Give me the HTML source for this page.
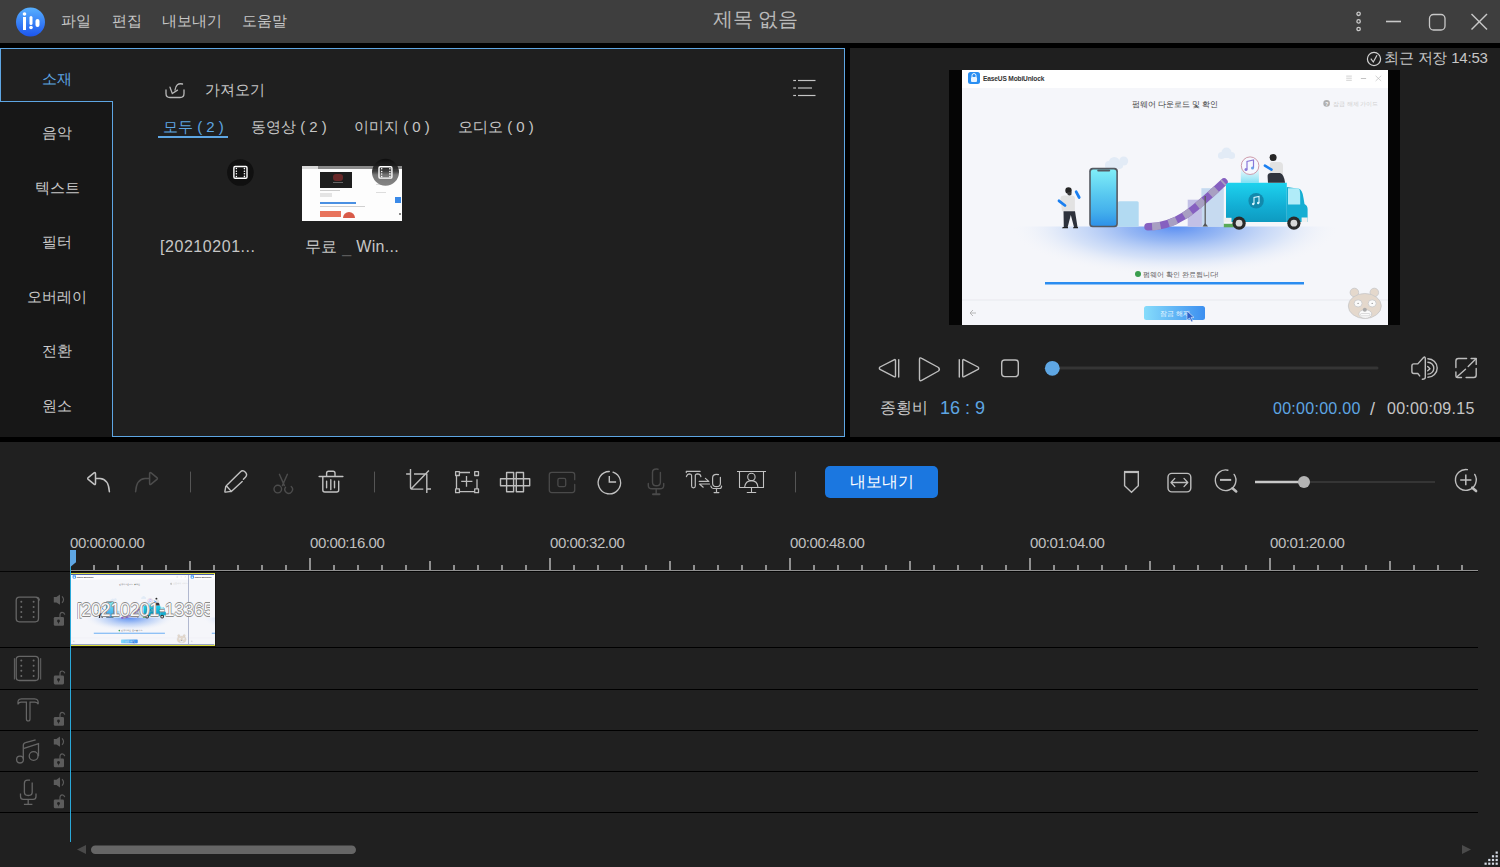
<!DOCTYPE html>
<html><head><meta charset="utf-8">
<style>
*{margin:0;padding:0;box-sizing:border-box}
html,body{width:1500px;height:867px;overflow:hidden;background:#000;font-family:"Liberation Sans",sans-serif;color:#c8c8c8}
.a{position:absolute}
.t{position:absolute;white-space:nowrap;line-height:1}
svg{position:absolute;overflow:visible}
</style></head><body>
<!-- title bar -->
<div class="a" style="left:0;top:0;width:1500px;height:43px;background:#3e3e3e"></div>
<!-- media panel -->
<div class="a" style="left:0;top:48px;width:845px;height:389px;background:#1f1f1f"></div>
<div class="a" style="left:0;top:102px;width:112px;height:335px;background:#171717"></div>
<!-- preview panel -->
<div class="a" style="left:850px;top:48px;width:650px;height:389px;background:#1f1f1f"></div>
<!-- bottom -->
<div class="a" style="left:0;top:442px;width:1500px;height:425px;background:#202020"></div>
<!-- ===== title bar contents ===== -->
<svg style="left:16px;top:7px" width="30" height="30" viewBox="0 0 30 30">
<defs><linearGradient id="lg" x1="0" y1="0" x2="0" y2="1"><stop offset="0" stop-color="#57b0ff"/><stop offset="1" stop-color="#1c55ee"/></linearGradient></defs>
<circle cx="14.5" cy="15" r="14.5" fill="url(#lg)"/>
<rect x="7" y="10" width="3" height="13" fill="#fff"/><circle cx="8.5" cy="7" r="1.8" fill="#fff"/>
<rect x="13.5" y="9" width="3" height="9" rx="1.5" fill="#fff"/><circle cx="15" cy="20.5" r="1.8" fill="#fff"/>
<rect x="19.5" y="12" width="4" height="8" rx="2" fill="#fff"/>
</svg>
<div class="t" style="left:61px;top:13px;font-size:15px;color:#c6c6c6">파일</div>
<div class="t" style="left:112px;top:13px;font-size:15px;color:#c6c6c6">편집</div>
<div class="t" style="left:162px;top:13px;font-size:15px;color:#c6c6c6">내보내기</div>
<div class="t" style="left:242px;top:13px;font-size:15px;color:#c6c6c6">도움말</div>
<div class="t" style="left:713px;top:9.5px;font-size:19.6px;color:#bababa">제목 없음</div>
<svg style="left:1350px;top:10px" width="150" height="24" viewBox="0 0 150 24">
<g fill="none" stroke="#c8c8c8" stroke-width="1.3">
<circle cx="8.6" cy="3.8" r="1.7"/><circle cx="8.6" cy="11.4" r="1.7"/><circle cx="8.6" cy="19" r="1.7"/>
<line x1="36" y1="11.5" x2="51" y2="11.5" stroke-width="1.6"/>
<rect x="79.5" y="4.5" width="15.5" height="15.5" rx="4"/>
<line x1="121.5" y1="4" x2="137" y2="19.5" stroke-width="1.4"/><line x1="137" y1="4" x2="121.5" y2="19.5" stroke-width="1.4"/>
</g></svg>

<!-- ===== media panel borders ===== -->
<div class="a" style="left:0;top:48px;width:845px;height:1px;background:#5ea6e3"></div>
<div class="a" style="left:0;top:48px;width:1px;height:54px;background:#5ea6e3"></div>
<div class="a" style="left:0;top:101px;width:113px;height:1px;background:#5ea6e3"></div>
<div class="a" style="left:112px;top:101px;width:1px;height:336px;background:#5ea6e3"></div>
<div class="a" style="left:112px;top:436px;width:733px;height:1px;background:#5ea6e3"></div>
<div class="a" style="left:844px;top:48px;width:1px;height:389px;background:#5ea6e3"></div>

<!-- sidebar labels -->
<div class="t" style="left:0;width:114px;text-align:center;top:71px;font-size:15px;color:#5ea6e3">소재</div>
<div class="t" style="left:0;width:114px;text-align:center;top:125px;font-size:15px">음악</div>
<div class="t" style="left:0;width:114px;text-align:center;top:180px;font-size:15px">텍스트</div>
<div class="t" style="left:0;width:114px;text-align:center;top:234px;font-size:15px">필터</div>
<div class="t" style="left:0;width:114px;text-align:center;top:289px;font-size:15px">오버레이</div>
<div class="t" style="left:0;width:114px;text-align:center;top:343px;font-size:15px">전환</div>
<div class="t" style="left:0;width:114px;text-align:center;top:398px;font-size:15px">원소</div>

<!-- import -->
<svg style="left:163px;top:78px" width="26" height="24" viewBox="0 0 26 24">
<g fill="none" stroke="#b8b8b8" stroke-width="1.3" stroke-linecap="round">
<path d="M3 12 v3.5 q0 4 4 4 h10 q4 0 4-4 v-3.5"/>
<path d="M19.5 6 Q13 4.5 12 12"/>
<path d="M7 9.2 L9.3 15.6 L14.5 12.1"/>
</g></svg>
<div class="t" style="left:205px;top:82px;font-size:15px;color:#c6c6c6">가져오기</div>
<svg style="left:792px;top:78px" width="26" height="22" viewBox="0 0 26 22">
<g stroke="#c4c4c4" stroke-width="1.2">
<line x1="1.2" y1="2.5" x2="4" y2="2.5"/><line x1="6" y1="2.5" x2="23.5" y2="2.5"/>
<line x1="1.2" y1="10" x2="4" y2="10"/><line x1="6" y1="10" x2="20" y2="10"/>
<line x1="1.2" y1="17.5" x2="4" y2="17.5"/><line x1="6" y1="17.5" x2="23.5" y2="17.5"/>
</g></svg>

<!-- tabs -->
<div class="t" style="left:163px;top:119px;font-size:15px;color:#5ea6e3">모두 ( 2 )</div>
<div class="a" style="left:158px;top:136px;width:70px;height:2px;background:#5ea6e3"></div>
<div class="t" style="left:251px;top:119px;font-size:15px;color:#c6c6c6">동영상 ( 2 )</div>
<div class="t" style="left:354px;top:119px;font-size:15px;color:#c6c6c6">이미지 ( 0 )</div>
<div class="t" style="left:458px;top:119px;font-size:15px;color:#c6c6c6">오디오 ( 0 )</div>

<!-- media items -->
<svg style="left:227px;top:159px" width="26" height="26" viewBox="0 0 26 26">
<circle cx="13.4" cy="13.5" r="13.3" fill="#101010"/>
<rect x="6.9" y="7.5" width="13.1" height="11.7" rx="1.2" fill="none" stroke="#fff" stroke-width="1.4"/>
<g fill="#fff"><circle cx="9.4" cy="9.6" r=".75"/><circle cx="9.4" cy="12.3" r=".75"/><circle cx="9.4" cy="14.7" r=".75"/><circle cx="9.4" cy="17.4" r=".75"/><circle cx="17.4" cy="9.6" r=".8"/><circle cx="17.4" cy="12.3" r=".8"/><circle cx="17.4" cy="14.7" r=".8"/><circle cx="17.4" cy="17.4" r=".8"/></g>
</svg>
<div class="t" style="left:160px;top:239px;font-size:16px;color:#c6c6c6;letter-spacing:0.55px">[20210201...</div>

<div class="a" style="left:302px;top:166px;width:100px;height:55px;background:#fdfdfd;overflow:hidden">
 <div class="a" style="left:0;top:0;width:100px;height:3px;background:#8a8a8a"></div>
 <div class="a" style="left:0;top:0;width:16px;height:3px;background:#d8d8d8"></div>
 <div class="a" style="left:18px;top:6px;width:32px;height:16px;background:#1e1e1e"></div>
 <div class="a" style="left:31px;top:8px;width:10px;height:7px;background:#7a2a2a;opacity:.8;border-radius:3px"></div>
 <div class="a" style="left:31px;top:16px;width:10px;height:1px;background:#666"></div>
 <div class="a" style="left:18px;top:24px;width:20px;height:1px;background:#ccc"></div>
 <div class="a" style="left:18px;top:27px;width:12px;height:4px;background:#e4e4e4"></div>
 <div class="a" style="left:18px;top:36px;width:36px;height:2px;background:#4a90e2"></div>
 <div class="a" style="left:18px;top:40px;width:45px;height:1px;background:#d0d0d0"></div>
 <div class="a" style="left:18px;top:45px;width:21px;height:6px;background:#e8735c"></div>
 <div class="a" style="left:41px;top:46px;width:12px;height:6px;background:#d85a48;border-radius:6px 6px 0 0"></div>
 <div class="a" style="left:93px;top:31px;width:6px;height:6px;background:#3a8ae8"></div>
 <div class="a" style="left:97px;top:47px;width:2px;height:2px;background:#888"></div>
 <div class="a" style="left:74px;top:18px;width:10px;height:1px;background:#ddd"></div>
 <div class="a" style="left:74px;top:26px;width:10px;height:1px;background:#ddd"></div>
</div>
<svg style="left:371px;top:158px" width="28" height="28" viewBox="0 0 28 28">
<defs><linearGradient id="bdg" x1="0" y1="0" x2="0" y2="1"><stop offset="0" stop-color="#0c0c0c"/><stop offset=".45" stop-color="#2a2a2a"/><stop offset=".6" stop-color="#6a6a6a"/><stop offset="1" stop-color="#7a7a7a"/></linearGradient></defs>
<circle cx="14.5" cy="14.2" r="13.5" fill="url(#bdg)" opacity=".92"/>
<rect x="8" y="8.7" width="12.9" height="11.4" rx="1.2" fill="none" stroke="#fff" stroke-width="1.4"/>
<g fill="#fff"><circle cx="10.7" cy="10.8" r=".75"/><circle cx="10.7" cy="13.5" r=".75"/><circle cx="10.7" cy="15.9" r=".75"/><circle cx="10.7" cy="18.6" r=".75"/><circle cx="18.9" cy="10.8" r=".8"/><circle cx="18.9" cy="13.5" r=".8"/><circle cx="18.9" cy="15.9" r=".8"/><circle cx="18.9" cy="18.6" r=".8"/></g>
</svg>

<div class="t" style="left:305px;top:239px;font-size:16px;color:#c6c6c6;letter-spacing:0.3px">무료 <span style="color:#5a5a5a;position:relative;top:1px">_</span> Win...</div>

<!-- ===== preview panel ===== -->
<svg style="left:1366px;top:51px" width="16" height="16" viewBox="0 0 16 16">
<circle cx="8" cy="8" r="6.6" fill="none" stroke="#d0d0d0" stroke-width="1.2"/>
<path d="M4.8 7.6 L7.3 11 L11 4.2" fill="none" stroke="#d0d0d0" stroke-width="1.2"/>
</svg>
<div class="t" style="left:1384px;top:50px;font-size:15px;color:#c6c6c6;letter-spacing:-0.2px">최근 저장 14:53</div>

<div class="a" style="left:949px;top:70px;width:451px;height:255px;background:#050505"></div>
<div class="a" style="left:962px;top:70px;width:426px;height:255px;background:#f5f6fa;overflow:hidden">
<svg style="left:0;top:0" width="426" height="255" viewBox="0 0 426 255">
<defs>
<radialGradient id="glow" gradientUnits="userSpaceOnUse" cx="213" cy="156.5" r="165" gradientTransform="translate(0,156.5) scale(1,0.3) translate(0,-156.5)"><stop offset="0" stop-color="#5a8ef2" stop-opacity="1"/><stop offset=".3" stop-color="#7fa8f2" stop-opacity=".8"/><stop offset=".65" stop-color="#b5cdf6" stop-opacity=".5"/><stop offset="1" stop-color="#f5f6fa" stop-opacity="0"/></radialGradient><linearGradient id="cy" x1="0" y1="0" x2="0" y2="1"><stop offset="0" stop-color="#e6f8fc" stop-opacity=".6"/><stop offset="1" stop-color="#7fe0f4"/></linearGradient>
<linearGradient id="ph" x1="0" y1="0" x2="0" y2="1"><stop offset="0" stop-color="#80eef8"/><stop offset=".45" stop-color="#58c8f0"/><stop offset=".75" stop-color="#44b0ec"/><stop offset="1" stop-color="#2f92e8"/></linearGradient>
<linearGradient id="tr" x1="0" y1="0" x2="0" y2="1"><stop offset="0" stop-color="#1ed2ee"/><stop offset=".6" stop-color="#12aed4"/><stop offset="1" stop-color="#0e9ac0"/></linearGradient>
<linearGradient id="btn" x1="0" y1="0" x2="1" y2="0"><stop offset="0" stop-color="#86dcfb"/><stop offset="1" stop-color="#3c8ff0"/></linearGradient>
</defs>
<g id="app"><rect x="0" y="0" width="426" height="255" fill="#f5f6fa"/>
<rect x="0" y="0" width="426" height="18" fill="#ffffff"/>
<rect x="6" y="2" width="12" height="12" rx="2.5" fill="#2a8ff2"/>
<rect x="9" y="7" width="6" height="5" rx="1" fill="#e8f4ff"/><path d="M10 7 v-1.5 a2 2 0 0 1 4 0 v1.5" fill="none" stroke="#e8f4ff" stroke-width="1"/>
<text x="21" y="11" font-family="Liberation Sans" font-size="6.6" font-weight="bold" fill="#333" letter-spacing="-0.15">EaseUS MobiUnlock</text>
<g stroke="#b4b4b4" stroke-width=".6"><line x1="384.2" y1="6.1" x2="389.8" y2="6.1"/><line x1="384.2" y1="8.2" x2="389.8" y2="8.2"/><line x1="384.2" y1="10.3" x2="389.8" y2="10.3"/><line x1="398.9" y1="8.5" x2="404.1" y2="8.5" stroke-width=".8"/><line x1="413.6" y1="5.8" x2="419.2" y2="11"/><line x1="419.2" y1="5.8" x2="413.6" y2="11"/></g>
<text x="213" y="37" text-anchor="middle" font-family="Liberation Sans" font-size="8" fill="#444">펌웨어 다운로드 및 확인</text>
<circle cx="364.6" cy="33.4" r="3.3" fill="#b0b0b0"/><text x="363.3" y="35.6" font-family="Liberation Sans" font-size="5" font-weight="bold" fill="#fff">?</text><text x="370.9" y="35.6" font-family="Liberation Sans" font-size="6" fill="#d0d0d0">잠금 해제 가이드</text>
<!-- glow -->
<clipPath id="gc"><rect x="0" y="156.5" width="426" height="60"/></clipPath>
<ellipse cx="213" cy="156.5" rx="165" ry="50" fill="url(#glow)" clip-path="url(#gc)"/>
<!-- clouds -->
<g fill="#e2ebf6"><circle cx="152.3" cy="92.4" r="5.5"/><circle cx="147" cy="95" r="4"/><circle cx="157" cy="95" r="4"/><rect x="143" y="94" width="18" height="4" rx="2"/><circle cx="161.7" cy="91" r="4.5"/><circle cx="264.5" cy="82.6" r="5"/><circle cx="259.5" cy="85.5" r="3.5"/><circle cx="269.5" cy="85.5" r="3.5"/><rect x="256" y="84" width="17" height="4" rx="2"/></g>
<!-- person left -->
<path d="M98.4 128 Q99 125.6 102 125.6 H110 Q112.9 125.6 112.9 128.5 V141.2 H100 Z" fill="#e2e2e2"/>
<path d="M101.5 141.2 H113 L115.5 157 H112 L108.8 145 L105.5 157.8 H101.8 Z" fill="#2e323c"/>
<path d="M100.8 157 H106 V158.3 H100 Z M111.5 157 H116 V158.3 H111 Z" fill="#222"/>
<circle cx="106.5" cy="120.5" r="3.2" fill="#262626"/><path d="M105.5 122 h4 v2.5 q-2 2 -4 0 z" fill="#3a3a3a"/>
<path d="M97 130.8 L103 135.5" stroke="#1a7ff0" stroke-width="2.8" stroke-linecap="round"/>
<path d="M114.2 121.8 L117.2 127.5" stroke="#1a7ff0" stroke-width="2.8" stroke-linecap="round"/>
<!-- phone -->
<rect x="155.9" y="131.3" width="20.8" height="25.5" rx="1.5" fill="#b2daf2"/>
<rect x="127.2" y="97.8" width="28.7" height="59.5" rx="3.5" fill="#555a62"/>
<rect x="128.8" y="99.4" width="25.5" height="56.3" rx="2.5" fill="url(#ph)"/>
<rect x="135.2" y="99.4" width="13" height="2" rx="1" fill="#555a62"/>
<!-- boxes + slide -->
<rect x="239.4" y="118.2" width="22.4" height="38.5" fill="#c6daf0"/>
<rect x="225.7" y="129.7" width="14.2" height="27" fill="#c2c0e6"/>
<path d="M186 156.8 C215 156.8 232 140 262 112" fill="none" stroke="#8660c0" stroke-width="7.5" stroke-linecap="round"/>
<path d="M186 156.8 C215 156.8 232 140 262 112" fill="none" stroke="#a89fc2" stroke-width="7.5" stroke-dasharray="8.5 8.5" stroke-dashoffset="-4"/>
<line x1="243.2" y1="126" x2="243.2" y2="155" stroke="#5a5a5a" stroke-width="1.3"/>
<path d="M240.5 156.5 L243.2 153 L246 156.5 Z" fill="#555"/>
<!-- truck -->
<rect x="278.8" y="97.4" width="18.1" height="15.3" fill="url(#cy)"/>
<circle cx="288.1" cy="95.7" r="8.8" fill="#f6f8ff" stroke="#c890a0" stroke-width=".9"/>
<path d="M285 99.5 V91.5 L291.5 90 V98" fill="none" stroke="#8a78d8" stroke-width="1.2"/><circle cx="284" cy="99.5" r="1.5" fill="#8a78d8"/><circle cx="290.5" cy="98" r="1.5" fill="#6aa0e8"/>
<path d="M264 116 Q264 112.7 267 112.7 H324.8 V152.1 H264 Z" fill="url(#tr)"/>
<path d="M324.8 117 L337 118.8 Q340.5 120 341.5 128 L342.5 134 Q345.6 135.5 345.6 139 V152.1 H324.8 Z" fill="#16aed2"/>
<path d="M326 118.2 H336.5 Q338 119 338.2 125 V134.6 H326 Z" fill="#b0ecf8"/>
<rect x="261.8" y="147.8" width="7.7" height="4.3" fill="#f0f0f0"/><rect x="339.6" y="147.5" width="6" height="4.6" fill="#f0f0f0"/>
<rect x="261.8" y="153.8" width="10" height="3.5" fill="#5aaa58"/>
<circle cx="294.1" cy="130.8" r="7.7" fill="#1289ac"/><path d="M292 134 V127.5 L297 126.5 V133" fill="none" stroke="#d8f6ff" stroke-width="1.1"/><circle cx="291.2" cy="134" r="1.2" fill="#d8f6ff"/><circle cx="296.2" cy="133" r="1.2" fill="#d8f6ff"/>
<circle cx="277.1" cy="153.2" r="6.6" fill="#2a2a2a"/><circle cx="277.1" cy="153.2" r="3.4" fill="#d8d8d8"/>
<circle cx="331.9" cy="153.2" r="6.6" fill="#2a2a2a"/><circle cx="331.9" cy="153.2" r="3.4" fill="#d8d8d8"/>
<path d="M307.8 94 Q308 91.9 311 91.9 H318 Q321 92.5 321 96 V105 H307.8 Z" fill="#e2e2e2"/>
<path d="M305.6 106 Q305.6 102.9 309 102.9 H318 Q322 104 323.1 112.7 H306 Z" fill="#30343e"/>
<circle cx="311.1" cy="87.5" r="3.5" fill="#262626"/>
<path d="M302.9 95.7 L309.5 99.6" stroke="#1a7ff0" stroke-width="2.6" stroke-linecap="round"/>
<!-- footer -->
<g fill="#3a9e4e"><circle cx="176" cy="204" r="3"/></g>
<text x="181" y="207" font-family="Liberation Sans" font-size="6.5" fill="#555">펌웨어 확인 완료됩니다!</text>
<rect x="83" y="212" width="259" height="2.5" fill="#2a8cf0"/>
<line x1="0" y1="230" x2="426" y2="230" stroke="#e8e9ee" stroke-width="1"/>
<path d="M14 243 h-6 M8 243 l3 -3 M8 243 l3 3" stroke="#b0b0b0" stroke-width=".9" fill="none"/>
<rect x="182" y="236" width="61" height="14" rx="2.5" fill="url(#btn)"/>
<text x="198" y="246" font-family="Liberation Sans" font-size="6.5" fill="#eaf6ff">잠금 해제</text>
<path d="M225 241 l0 9 l2.5 -2 l2 4 l1.5 -.8 l-2 -3.8 l3 0 z" fill="#2f62c8" stroke="#fff" stroke-width=".5"/>
<!-- bear -->
<g stroke="#c6c6c8" stroke-width=".8">
<circle cx="392.4" cy="222.5" r="4.3" fill="#e4d8cc"/><circle cx="412.3" cy="222.5" r="4.3" fill="#e4d8cc"/>
<ellipse cx="402.8" cy="236" rx="16.5" ry="12.5" fill="#e4d8cc"/>
<ellipse cx="396.1" cy="233.4" rx="4" ry="3.6" fill="#fafafa"/><ellipse cx="410.2" cy="233.4" rx="4" ry="3.6" fill="#fafafa"/>
<ellipse cx="403.3" cy="244" rx="6.5" ry="4.3" fill="#fafafa"/>
</g>
<circle cx="396.1" cy="233.4" r=".7" fill="#999"/><circle cx="410.2" cy="233.4" r=".7" fill="#999"/>
<circle cx="402.8" cy="239.7" r="2" fill="#aaa"/>
<rect x="398.5" y="243.5" width="9.5" height="2.3" rx="1" fill="none" stroke="#c6c6c8" stroke-width=".6"/>
</g>
</svg>
</div>

<!-- controls -->
<svg style="left:870px;top:350px" width="630" height="36" viewBox="0 0 630 36">
<g fill="none" stroke="#bdbdbd" stroke-width="1.4" stroke-linejoin="round" stroke-linecap="round">
<path d="M25.5 10.5 Q25.5 9 24 9.8 L10 17 Q8.7 18.2 10 19.4 L24 26.6 Q25.5 27.4 25.5 25.9 Z"/>
<path d="M28.7 9.7 V27"/>
<path d="M49.5 9.5 Q49.5 7 51.7 8.3 L68.5 17.5 Q70.2 19.3 68.5 21 L51.7 30.3 Q49.5 31.5 49.5 29 Z"/>
<path d="M89.3 9.7 V27"/>
<path d="M92.7 10.5 Q92.7 9 94.2 9.8 L108 17 Q109.3 18.2 108 19.4 L94.2 26.6 Q92.7 27.4 92.7 25.9 Z"/>
<rect x="131.7" y="10" width="16.6" height="16.6" rx="3"/>
</g>
<line x1="182" y1="18" x2="507" y2="18" stroke="#353535" stroke-width="3" stroke-linecap="round"/>
<circle cx="182.3" cy="18.3" r="7.4" fill="#5ea6e3"/>
<g fill="none" stroke="#bdbdbd" stroke-width="1.4" stroke-linejoin="round" stroke-linecap="round">
<path d="M549.7 25.9 L547.8 23.5 H543.9 Q541.9 23.5 541.9 21.5 V15.9 Q541.9 13.9 543.9 13.9 H547.8 L553.3 7.7 Q555.3 6 555.3 8.7 V27.3 Q555.3 29.3 552.3 29.3"/>
<path d="M557.9 8.7 A9.3 9.3 0 0 1 557.9 27.3"/>
<path d="M557.9 12.3 A5.9 5.9 0 0 1 557.9 24.1"/>
<path d="M557.7 16.5 L560 18.7 L557.7 20.8"/>
<g transform="translate(0.8,0)">
<path d="M595.8 8.5 H587.6 Q585.1 8.5 585.1 11 V17.6"/>
<path d="M585.1 21.9 V26 Q585.1 27.5 586.6 27.5 H590.7"/>
<path d="M595.3 27.5 H603 Q605.4 27.5 605.4 25 V18.4"/>
<path d="M600.3 8.5 H605.4 V14.4"/>
<path d="M597.4 16.5 L605.2 8.8"/>
<path d="M594.7 19.2 L586.2 26.7"/>
</g>
</g>
</svg>
<div class="t" style="left:880px;top:400px;font-size:16px;color:#c6c6c6">종횡비</div>
<div class="t" style="left:940px;top:399px;font-size:18px;color:#5ea6e3">16 : 9</div>
<div class="t" style="left:1273px;top:401px;font-size:16px;color:#5ea6e3;letter-spacing:0.28px">00:00:00.00</div>
<div class="t" style="left:1370px;top:400px;font-size:18px;color:#c6c6c6">/</div>
<div class="t" style="left:1387px;top:401px;font-size:16px;color:#c6c6c6;letter-spacing:0.28px">00:00:09.15</div>

<!-- ===== toolbar ===== -->
<svg style="left:0;top:460px" width="1500" height="44" viewBox="0 0 1500 44">
<g fill="none" stroke-width="1.5" stroke-linecap="round" stroke-linejoin="round">
<!-- undo -->
<path d="M95.5 18.5 V13.8 Q95.5 11.8 94 12.9 L88.2 17.6 Q87.2 18.5 88.2 19.4 L94 24.2 Q95.5 25.3 95.5 23.3 Z M95.5 18.6 H100 Q108.5 19 109.4 31.7" stroke="#c2c2c2"/>
<!-- redo -->
<path d="M149.6 18.5 V13.8 Q149.6 11.8 151.1 12.9 L156.9 17.6 Q157.9 18.5 156.9 19.4 L151.1 24.2 Q149.6 25.3 149.6 23.3 Z M149.6 18.6 H145 Q136.5 19 135.6 31.7" stroke="#4c4c4c"/>
<line x1="190.5" y1="12" x2="190.5" y2="32" stroke="#555" stroke-width="1"/>
<!-- pencil -->
<path d="M226.3 25.8 L240.3 12 Q242.8 9.6 245.4 12.2 Q247.8 14.8 245.4 17.2 L243.4 19.2 M242.2 21.4 L231.3 31.4 L225.6 32.1 Q224.7 32.2 224.9 31.3 L225.8 26.4 M226.3 25.8 L231.3 31.4" stroke="#c2c2c2" stroke-width="1.4"/>
<!-- scissors -->
<path d="M279.4 14.3 L284.4 25.6 M287.4 14.3 L282.4 25.6" stroke="#4c4c4c" stroke-width="1.4"/>
<circle cx="277.8" cy="29.1" r="3.8" stroke="#4c4c4c" stroke-width="1.4"/>
<path d="M285.6 27.2 A3.8 3.8 0 1 0 291.2 26.6" stroke="#4c4c4c" stroke-width="1.4"/>
<!-- trash -->
<path d="M319.1 16.5 H342.9 M326.6 16.5 V13.3 Q326.6 11.3 328.6 11.3 H333 Q335 11.3 335 13.3 V16.5 M322.8 16.5 V30 Q322.8 32 324.8 32 H336.7 Q338.7 32 338.7 30 V21.1 M326.6 21.1 V27.7 M330.8 19.7 V29.5 M334.5 21.1 V27.7" stroke="#c2c2c2" stroke-width="1.4"/>
<line x1="374.5" y1="12" x2="374.5" y2="32" stroke="#555" stroke-width="1"/>
<!-- crop -->
<path d="M406.1 14 H409.8 M414 14 H426.8 V33 M427 29 H431 M410.5 9 V27.2 Q410.5 29.1 412.4 29.1 H423.3 M411.5 28.4 L428.9 10.4" stroke="#bdbdbd" stroke-width="1.4" stroke-linecap="butt"/>
<!-- bbox -->
<g stroke="#bdbdbd" stroke-width="1.3" stroke-linecap="butt">
<rect x="455.6" y="11.7" width="3.8" height="3.8"/><rect x="474.7" y="11.7" width="3.8" height="3.8"/><rect x="455.6" y="28.9" width="3.8" height="3.8"/><rect x="474.7" y="28.9" width="3.8" height="3.8"/>
<path d="M459.4 12.5 H470 M456.5 15.5 V28.9 M477 19.3 V28.9 M459.4 31.7 H474.7 M461.2 21.4 H472.4 M466.5 16 V26.7"/>
</g>
<!-- grid -->
<g stroke="#bdbdbd" stroke-width="1.4" stroke-linecap="butt">
<rect x="506.6" y="12.5" width="7" height="19.2"/><rect x="516.3" y="12.5" width="7.2" height="19.2"/><rect x="500.5" y="18.7" width="29.2" height="7"/>
</g>
<!-- disabled square -->
<path d="M574.7 19.7 V14.8 Q574.7 12.3 572.2 12.3 H551.8 Q549.3 12.3 549.3 14.8 V30.1 Q549.3 32.6 551.8 32.6 H572.2 Q574.7 32.6 574.7 30.1 V24.4" stroke="#4a4a4a" stroke-width="1.3"/>
<rect x="557.9" y="18.4" width="7.8" height="8.2" rx="1.5" stroke="#4a4a4a" stroke-width="1.3"/>
<!-- clock -->
<path d="M613 12.1 A11.2 11.2 0 1 1 609.3 11.5" stroke="#c2c2c2" stroke-width="1.3"/>
<path d="M609.3 16 V22 H616.1" stroke="#c2c2c2" stroke-width="1.4" stroke-linecap="butt" stroke-linejoin="miter"/>
<!-- mic disabled -->
<path d="M658 9.3 Q656.5 9 656.4 9 Q652.5 9 652.5 12.5 V22.3 Q652.5 25.8 656.4 25.8 Q660.4 25.8 660.4 22.3 V12.5" stroke="#4a4a4a" stroke-width="1.4"/>
<path d="M648.3 23.5 V25.5 Q648.3 28.8 652 28.8 H660 Q663.7 28.8 663.7 25.5 V23.5 M656.2 29 V33.7" stroke="#4a4a4a" stroke-width="1.4"/>
<path d="M653 34.2 H659.5" stroke="#4a4a4a" stroke-width="2"/>
<!-- T <-> mic -->
<g stroke="#bdbdbd" stroke-width="1.2" stroke-linecap="round" stroke-linejoin="round" fill="none">
<path d="M686.3 11.4 H700.1 M686.3 11.4 V12.6"/>
<path d="M686.4 16.6 Q687.3 13.8 689.6 13.8 Q691.6 13.9 691.6 15.6 V26 Q691.6 27.8 693.45 27.8 Q695.3 27.8 695.3 26 V15.6 Q695.3 13.9 697.5 13.8 Q700.4 13.8 700.9 16.6"/>
<path d="M699.2 21.4 H708.8 L705.4 18.4 M709.6 24 H699.5 L703.2 27.2"/>
<path d="M718.5 14.6 Q718 14.4 716.5 14.4 Q712.6 14.4 712.6 18 V23.2 Q712.6 26.7 716.5 26.7 Q720.4 26.7 720.4 23.2 V17.3"/>
<path d="M710.9 26.1 Q711.4 28.5 713.2 28.5 H719.7 Q721.3 28.5 721.6 26.1 M716.5 28.6 V32.4 M714.1 32.6 H718.9"/>
</g>
<!-- presenter -->
<g stroke="#c2c2c2" stroke-width="1.1" stroke-linecap="butt">
<path d="M737 11.5 H766 M739.5 11.5 V27.5 H763.5 V11.5 M751.5 27.5 V32.5 M746.8 32.5 H756.2"/>
<circle cx="751.4" cy="16.9" r="3.7"/>
<path d="M744.6 27.2 Q745.5 20.6 751.4 20.6 Q757.3 20.6 758 27.2"/>
</g>
<line x1="795.5" y1="12" x2="795.5" y2="32" stroke="#555" stroke-width="1"/>
</g>
<rect x="825" y="466" width="113" height="32" rx="5" fill="#1b77e0" transform="translate(0,-460)"/>
<g fill="none" stroke-linecap="round" stroke-linejoin="round">
<!-- marker -->
<path d="M1124.6 12.2 V25.8 L1131.5 32.3 L1138.3 25.8 V12.2 Z" stroke="#bdbdbd" stroke-width="1.4" stroke-linejoin="miter"/>
<path d="M1124 12 H1139" stroke="#bdbdbd" stroke-width="2.2" stroke-linecap="butt"/>
<!-- fit -->
<rect x="1168" y="13.4" width="22.8" height="18.5" rx="3.8" stroke="#bdbdbd" stroke-width="1.4"/>
<path d="M1171.2 22.5 H1187.6 M1174.8 18.4 L1171 22.5 L1174.8 26.6 M1184 18.4 L1187.8 22.5 L1184 26.6" stroke="#bdbdbd" stroke-width="1.3"/>
<!-- zoom out -->
<path d="M1234.1 14.4 A10.3 10.3 0 1 1 1227.9 10.2" stroke="#bdbdbd" stroke-width="1.4"/>
<path d="M1220 19.9 H1231.2" stroke="#bdbdbd" stroke-width="2" stroke-linecap="butt"/>
<path d="M1232.5 28.3 L1236.2 31.4" stroke="#bdbdbd" stroke-width="2.6"/>
<!-- zoom in -->
<path d="M1474.7 14.45 A10.4 10.4 0 1 1 1467.4 9.6" stroke="#bdbdbd" stroke-width="1.4"/>
<path d="M1460.2 19.9 H1471.4 M1465.8 14.6 V25.3" stroke="#bdbdbd" stroke-width="1.5" stroke-linecap="butt"/>
<path d="M1472.3 27.7 L1476.1 31" stroke="#bdbdbd" stroke-width="2.6"/>
</g>
<line x1="1303" y1="22" x2="1435" y2="22" stroke="#353535" stroke-width="2.2"/>
<line x1="1255" y1="22" x2="1303" y2="22" stroke="#c8c8c8" stroke-width="2.6"/>
<circle cx="1304" cy="22" r="6" fill="#b4b4b4"/>
</svg>
<div class="t" style="left:825px;top:474px;width:113px;text-align:center;font-size:16px;color:#fff">내보내기</div>

<!-- ===== timeline ruler ===== -->
<div class="t" style="left:70px;top:535px;font-size:15px;color:#c0c0c0;letter-spacing:-0.45px">00:00:00.00</div>
<div class="t" style="left:310px;top:535px;font-size:15px;color:#c0c0c0;letter-spacing:-0.45px">00:00:16.00</div>
<div class="t" style="left:550px;top:535px;font-size:15px;color:#c0c0c0;letter-spacing:-0.45px">00:00:32.00</div>
<div class="t" style="left:790px;top:535px;font-size:15px;color:#c0c0c0;letter-spacing:-0.45px">00:00:48.00</div>
<div class="t" style="left:1030px;top:535px;font-size:15px;color:#c0c0c0;letter-spacing:-0.45px">00:01:04.00</div>
<div class="t" style="left:1270px;top:535px;font-size:15px;color:#c0c0c0;letter-spacing:-0.45px">00:01:20.00</div>
<svg style="left:0;top:0" width="1500" height="600" viewBox="0 0 1500 600"><g fill="#909090"><rect x="93" y="565" width="2" height="5"/><rect x="117" y="565" width="2" height="5"/><rect x="141" y="565" width="2" height="5"/><rect x="165" y="565" width="2" height="5"/><rect x="189" y="561" width="2" height="9"/><rect x="213" y="565" width="2" height="5"/><rect x="237" y="565" width="2" height="5"/><rect x="261" y="565" width="2" height="5"/><rect x="285" y="565" width="2" height="5"/><rect x="309" y="558" width="2" height="12"/><rect x="333" y="565" width="2" height="5"/><rect x="357" y="565" width="2" height="5"/><rect x="381" y="565" width="2" height="5"/><rect x="405" y="565" width="2" height="5"/><rect x="429" y="561" width="2" height="9"/><rect x="453" y="565" width="2" height="5"/><rect x="477" y="565" width="2" height="5"/><rect x="501" y="565" width="2" height="5"/><rect x="525" y="565" width="2" height="5"/><rect x="549" y="558" width="2" height="12"/><rect x="573" y="565" width="2" height="5"/><rect x="597" y="565" width="2" height="5"/><rect x="621" y="565" width="2" height="5"/><rect x="645" y="565" width="2" height="5"/><rect x="669" y="561" width="2" height="9"/><rect x="693" y="565" width="2" height="5"/><rect x="717" y="565" width="2" height="5"/><rect x="741" y="565" width="2" height="5"/><rect x="765" y="565" width="2" height="5"/><rect x="789" y="558" width="2" height="12"/><rect x="813" y="565" width="2" height="5"/><rect x="837" y="565" width="2" height="5"/><rect x="861" y="565" width="2" height="5"/><rect x="885" y="565" width="2" height="5"/><rect x="909" y="561" width="2" height="9"/><rect x="933" y="565" width="2" height="5"/><rect x="957" y="565" width="2" height="5"/><rect x="981" y="565" width="2" height="5"/><rect x="1005" y="565" width="2" height="5"/><rect x="1029" y="558" width="2" height="12"/><rect x="1053" y="565" width="2" height="5"/><rect x="1077" y="565" width="2" height="5"/><rect x="1101" y="565" width="2" height="5"/><rect x="1125" y="565" width="2" height="5"/><rect x="1149" y="561" width="2" height="9"/><rect x="1173" y="565" width="2" height="5"/><rect x="1197" y="565" width="2" height="5"/><rect x="1221" y="565" width="2" height="5"/><rect x="1245" y="565" width="2" height="5"/><rect x="1269" y="558" width="2" height="12"/><rect x="1293" y="565" width="2" height="5"/><rect x="1317" y="565" width="2" height="5"/><rect x="1341" y="565" width="2" height="5"/><rect x="1365" y="565" width="2" height="5"/><rect x="1389" y="561" width="2" height="9"/><rect x="1413" y="565" width="2" height="5"/><rect x="1437" y="565" width="2" height="5"/><rect x="1461" y="565" width="2" height="5"/><rect x="70" y="570" width="1408" height="1"/></g></svg>

<!-- ===== tracks ===== -->
<div class="a" style="left:0;top:571px;width:1478px;height:1px;background:#050505"></div>
<div class="a" style="left:0;top:647px;width:1478px;height:1px;background:#000"></div>
<div class="a" style="left:0;top:689px;width:1478px;height:1px;background:#000"></div>
<div class="a" style="left:0;top:730px;width:1478px;height:1px;background:#000"></div>
<div class="a" style="left:0;top:771px;width:1478px;height:1px;background:#000"></div>
<div class="a" style="left:0;top:812px;width:1478px;height:1px;background:#000"></div>
<svg style="left:0;top:0" width="70" height="867" viewBox="0 0 70 867">
<defs>
<g id="spk"><path d="M0 2.4 H2.6 L6.2 0 V10.1 L2.6 7.8 H0 Z" fill="#5c5c5c"/><path d="M8.2 1.8 Q11.3 5 8.2 8.3" fill="none" stroke="#5c5c5c" stroke-width="1.1"/></g>
<g id="lock"><rect x="0" y="4" width="10.2" height="8.8" rx="1.3" fill="#5c5c5c"/><path d="M6.2 4.5 V2.1 Q6.2 -0.6 8.4 -0.6 Q10.3 -0.6 11 1.6" fill="none" stroke="#5c5c5c" stroke-width="1.2"/><circle cx="4.7" cy="8" r="1.4" fill="#222"/><path d="M3.9 8.3 L4.7 11.3 L5.5 8.3 Z" fill="#222"/></g>
</defs>
<g fill="none" stroke="#666" stroke-width="1.3">
<rect x="16.2" y="597.2" width="22.3" height="24.6" rx="3.2"/>
<path d="M36.5 597.5 Q39.2 597.2 39.4 600.5"/>
<rect x="16.2" y="656.3" width="22.3" height="24.2" rx="3.2"/>
<path d="M14.4 658.2 V679.5 M40.7 658.2 V679.5" stroke-width="1"/>
</g>
<g fill="#6a6a6a"><circle cx="21.3" cy="601.8" r="1"/><circle cx="33.6" cy="601.8" r="1"/><circle cx="21.3" cy="606.9" r="1"/><circle cx="33.6" cy="606.9" r="1"/><circle cx="21.3" cy="612.0" r="1"/><circle cx="33.6" cy="612.0" r="1"/><circle cx="21.3" cy="617.1" r="1"/><circle cx="33.6" cy="617.1" r="1"/><circle cx="21.3" cy="660.6" r="1"/><circle cx="33.6" cy="660.6" r="1"/><circle cx="21.3" cy="665.7" r="1"/><circle cx="33.6" cy="665.7" r="1"/><circle cx="21.3" cy="670.8" r="1"/><circle cx="33.6" cy="670.8" r="1"/><circle cx="21.3" cy="675.9" r="1"/><circle cx="33.6" cy="675.9" r="1"/></g>
<use href="#spk" x="53.8" y="594.6"/>
<use href="#lock" x="53.8" y="613"/>
<use href="#lock" x="53.8" y="671.6"/>
<!-- T -->
<path d="M18 704.3 Q17.2 698.8 21.5 698.8 H34.5 Q38.8 698.8 38.2 704.3 M18 704.3 Q18.8 702.2 21 702.2 H26.4 V719 Q26.4 721 28.2 721 Q30 721 30 719 V702.2 H35 Q37.5 702.2 38.2 704.3" fill="none" stroke="#666" stroke-width="1.2"/>
<use href="#lock" x="53.8" y="713"/>
<!-- music -->
<g fill="none" stroke="#666" stroke-width="1.3">
<circle cx="20" cy="759.6" r="3.4"/><circle cx="33.6" cy="756" r="4.4"/>
<path d="M23.3 759 V745.5 Q23.3 743 25.5 742.6 L35.6 739.8 M24 748.4 L38.5 743.6 V756.2"/>
</g>
<use href="#spk" x="53.8" y="736.6"/>
<use href="#lock" x="53.8" y="754.5"/>
<!-- mic -->
<g fill="none" stroke="#666" stroke-width="1.3">
<path d="M30 780.2 H27.5 Q24.4 780.2 24.4 783.3 V792.3 Q24.4 795.5 28.3 795.5 Q32.2 795.5 32.2 792.3 V782.5"/>
<path d="M20.5 793.4 V796.4 Q20.5 799.3 23.4 799.3 H33.1 Q36 799.3 36 796.4 V793.4 M28.2 799.4 V804.2 M23.9 804.3 H32.4"/>
</g>
<use href="#spk" x="53.8" y="777.3"/>
<use href="#lock" x="53.8" y="795.5"/>
</svg>

<!-- clip -->
<div class="a" style="left:70px;top:573px;width:146px;height:74px;background:#151515"></div>
<div class="a" style="left:70px;top:573px;width:145px;height:73px;background:#dcdc3c;overflow:hidden">
 <svg style="left:1px;top:1px" width="143" height="71" viewBox="0 0 143 71">
  <rect x="0" y="0" width="143" height="71" fill="#f5f6fa"/>
  <g transform="translate(0,0.6) scale(0.2746)"><use href="#app"/></g>
  <line x1="117.7" y1="0" x2="117.7" y2="71" stroke="#8a96b8" stroke-width="0.8"/>
  <g transform="translate(118,0.6) scale(0.2746)"><use href="#app"/></g>
  <rect x="0" y="0" width="143" height="1" fill="#4a5fa8"/>
  <rect x="0" y="70" width="143" height="1" fill="#9aa6c8"/>
 </svg>
 <div class="t" style="left:6.5px;top:28px;width:133px;overflow:hidden;font-size:18px;color:#f8f8f8;letter-spacing:-0.3px;text-shadow:0.6px 0 0 #8a8a8a,-0.6px 0 0 #8a8a8a,0 0.6px 0 #8a8a8a,0 -0.6px 0 #8a8a8a">[20210201-13365</div>
</div>

<!-- playhead -->
<div class="a" style="left:70px;top:550px;width:1px;height:292px;background:#2aa8d8"></div>
<svg style="left:69px;top:550px" width="10" height="20" viewBox="0 0 10 20">
<path d="M1 0 H7 V12.3 L1 17.2 Z" fill="#5ea6e3"/>
</svg>

<!-- scrollbar -->
<svg style="left:0;top:838px" width="1500" height="29" viewBox="0 0 1500 29">
<path d="M77 11.5 L86 7 V16 Z" fill="#4a4a4a"/>
<rect x="91" y="7.5" width="265" height="8.5" rx="4.25" fill="#666"/>
<path d="M1471 11.5 L1462 7 V16 Z" fill="#4a4a4a"/>
<g fill="#d4dae4"><rect x="1495.6" y="13.5" width="2.2" height="2.2"/><rect x="1491.9" y="17.200000000000045" width="2.2" height="2.2"/><rect x="1495.6" y="17.200000000000045" width="2.2" height="2.2"/><rect x="1488.2" y="20.899999999999977" width="2.2" height="2.2"/><rect x="1491.9" y="20.899999999999977" width="2.2" height="2.2"/><rect x="1495.6" y="20.899999999999977" width="2.2" height="2.2"/><rect x="1484.5" y="24.600000000000023" width="2.2" height="2.2"/><rect x="1488.2" y="24.600000000000023" width="2.2" height="2.2"/><rect x="1491.9" y="24.600000000000023" width="2.2" height="2.2"/><rect x="1495.6" y="24.600000000000023" width="2.2" height="2.2"/></g>
</svg>

</body></html>
